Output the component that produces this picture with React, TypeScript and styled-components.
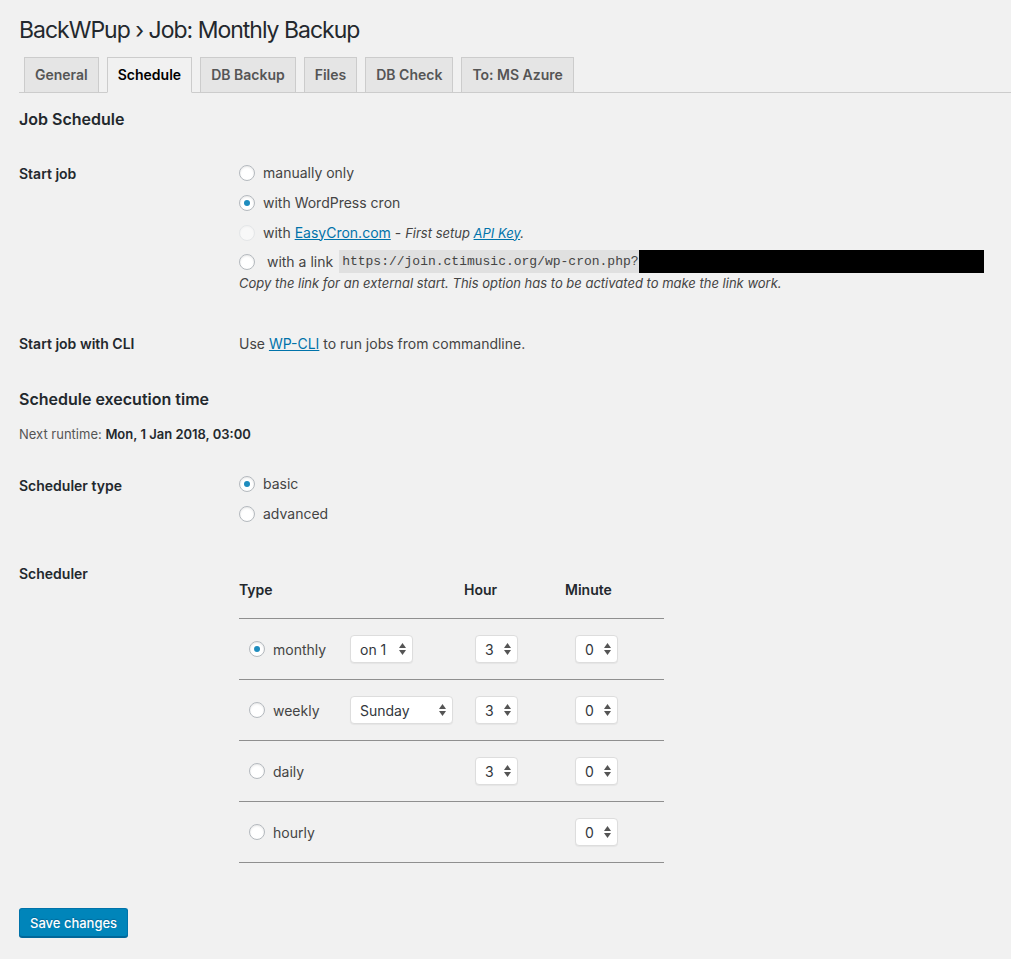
import styled, { createGlobalStyle } from 'styled-components'

const GlobalStyle = createGlobalStyle`
    html, body {
        margin: 0;
        padding: 0;
        background: #f1f1f1;
    }
    body {
        font-family: Inter, "Liberation Sans", Arial, sans-serif;
        color: #444;
        font-size: 13px;
    }
`

const Wrap = styled.div`
    padding-left: 19px;
    padding-bottom: 20px;
`

const Title = styled.h1`
    margin: 16px 0 12px;
    font-size: 23px;
    line-height: 29px;
    font-weight: 400;
    letter-spacing: -1px;
    color: #23282d;
`

const TabBar = styled.nav`
    display: flex;
    border-bottom: 1px solid #ccc;
    padding-left: 5px;
    height: 35px;
`

const Tab = styled.a<{ $active?: boolean }>`
    display: block;
    margin-right: 8px;
    padding: 5px 10px;
    height: 24px;
    line-height: 24px;
    font-size: 14px;
    font-weight: 600;
    text-decoration: none;
    border: 1px solid #ccc;
    background: ${p => (p.$active ? '#f1f1f1' : '#e5e5e5')};
    border-bottom-color: ${p => (p.$active ? '#f1f1f1' : '#ccc')};
    color: ${p => (p.$active ? '#000' : '#555')};
`

const SectionTitle = styled.h3<{ $top: number }>`
    margin: ${p => p.$top}px 0 0;
    font-size: 16px;
    line-height: 21px;
    font-weight: 600;
    color: #23282d;
`

const Row = styled.div<{ $top: number }>`
    display: grid;
    grid-template-columns: 220px 1fr;
    margin-top: ${p => p.$top}px;
`

const Label = styled.div<{ $pad?: number }>`
    padding-top: ${p => p.$pad ?? 0}px;
    font-size: 14px;
    line-height: 18px;
    font-weight: 600;
    color: #23282d;
`

const Value = styled.div`
    font-size: 14px;
    line-height: 18px;
    color: #444;
`

const Choice = styled.label<{ $h?: number }>`
    display: flex;
    align-items: center;
    height: ${p => p.$h ?? 30}px;
    padding-top: 1px;
    box-sizing: border-box;
    font-size: 14px;
    color: #444;
    white-space: nowrap;
`

const Radio = styled.span<{ $checked?: boolean; $disabled?: boolean }>`
    position: relative;
    flex: none;
    width: 16px;
    height: 16px;
    box-sizing: border-box;
    margin-right: 8px;
    border-radius: 50%;
    border: 1px solid ${p => (p.$disabled ? '#e4e6e8' : '#b4b9be')};
    background: ${p => (p.$disabled ? 'rgba(255,255,255,.5)' : '#fff')};
    box-shadow: inset 0 1px 2px rgba(0, 0, 0, ${p => (p.$disabled ? 0.03 : 0.1)});
    &::after {
        content: '';
        display: ${p => (p.$checked ? 'block' : 'none')};
        position: absolute;
        left: 4px;
        top: 4px;
        width: 6px;
        height: 6px;
        border-radius: 50%;
        background: #1e8cbe;
    }
`

const Link = styled.a`
    color: #0073aa;
    text-decoration: underline;
`

const Em = styled.em`
    font-size: 13px;
`

const Code = styled.code`
    margin-left: 6px;
    padding: 3px 0 2px 3px;
    background: rgba(0, 0, 0, 0.07);
    font-family: "Liberation Mono", "DejaVu Sans Mono", monospace;
    font-size: 13px;
    line-height: 18px;
`

const Redacted = styled.span`
    display: inline-block;
    width: 345px;
    height: 23px;
    background: #000;
    vertical-align: middle;
`

const Hint = styled.p`
    margin: 0;
    font-size: 13px;
    line-height: 16px;
    font-style: italic;
    color: #444;
`

const Runtime = styled.p`
    margin: 15px 0 0;
    font-size: 13px;
    line-height: 18px;
    color: #555;
    strong {
        color: #23282d;
        font-weight: 600;
    }
`

const SchedTable = styled.div`
    width: 425px;
`

const SchedRow = styled.div<{ $head?: boolean }>`
    display: grid;
    grid-template-columns: 111px 114px 101px 99px;
    align-items: center;
    height: ${p => (p.$head ? 53 : 60)}px;
    border-bottom: 1px solid #8f8f8f;
`

const HeadCell = styled.div<{ $span?: number }>`
    grid-column: span ${p => p.$span ?? 1};
    align-self: start;
    padding-top: 16px;
    font-size: 14px;
    line-height: 18px;
    font-weight: 600;
    color: #23282d;
`

const Cell = styled.div<{ $pad?: number }>`
    display: flex;
    align-items: center;
    padding-left: ${p => p.$pad ?? 0}px;
    font-size: 14px;
    color: #444;
`

const Select = styled.div<{ $w: number }>`
    display: flex;
    align-items: center;
    justify-content: space-between;
    box-sizing: border-box;
    width: ${p => p.$w}px;
    height: 28px;
    padding: 0 6px 0 9px;
    background: #fff;
    border: 1px solid #ddd;
    border-radius: 4px;
    box-shadow: 0 1px 1px rgba(0, 0, 0, 0.05);
    font-size: 14px;
    color: #32373c;
`

const Button = styled.button`
    margin-top: 45px;
    height: 29px;
    padding: 0 10px;
    background: #0085ba;
    border: 1px solid #0073aa;
    border-bottom-color: #006799;
    border-radius: 3px;
    box-shadow: 0 1px 0 #006799;
    color: #fff;
    font-family: inherit;
    font-size: 13px;
    font-weight: 500;
    text-shadow: 0 -1px 1px #006799;
`

const Arrows = () => (
    <svg width="7" height="12" viewBox="0 0 7 12">
        <polygon points="0,5 3.5,0 7,5" fill="#555" />
        <polygon points="0,7 3.5,12 7,7" fill="#555" />
    </svg>
)

const Dropdown = ({ value, width }: { value: string; width: number }) => (
    <Select $w={width}>
        <span>{value}</span>
        <Arrows />
    </Select>
)

const scheduleRows = [
    { type: 'monthly', checked: true, extra: { value: 'on 1', width: 63 }, hour: true },
    { type: 'weekly', checked: false, extra: { value: 'Sunday', width: 103 }, hour: true },
    { type: 'daily', checked: false, extra: null, hour: true },
    { type: 'hourly', checked: false, extra: null, hour: false },
]

const tabs = ['General', 'Schedule', 'DB Backup', 'Files', 'DB Check', 'To: MS Azure']

const App = () => {
    return (
        <>
            <GlobalStyle />
            <Wrap>
                <Title>BackWPup › Job: Monthly Backup</Title>
                <TabBar>
                    {tabs.map(t => (
                        <Tab key={t} $active={t === 'Schedule'}>{t}</Tab>
                    ))}
                </TabBar>

                <SectionTitle $top={16}>Job Schedule</SectionTitle>

                <Row $top={27}>
                    <Label $pad={8}>Start job</Label>
                    <Value>
                        <Choice><Radio />manually only</Choice>
                        <Choice><Radio $checked />with WordPress cron</Choice>
                        <Choice>
                            <Radio $disabled />with&nbsp;<Link>EasyCron.com</Link>&nbsp;-&nbsp;<Em>First setup <Link>API Key</Link>.</Em>
                        </Choice>
                        <Choice $h={28}>
                            <Radio />&nbsp;with a link
                            <Code>https://join.ctimusic.org/wp-cron.php?</Code>
                            <Redacted />
                        </Choice>
                        <Hint>Copy the link for an external start. This option has to be activated to make the link work.</Hint>
                    </Value>
                </Row>

                <Row $top={44}>
                    <Label>Start job with CLI</Label>
                    <Value>Use <Link>WP-CLI</Link> to run jobs from commandline.</Value>
                </Row>

                <SectionTitle $top={36}>Schedule execution time</SectionTitle>
                <Runtime>Next runtime: <strong>Mon, 1 Jan 2018, 03:00</strong></Runtime>

                <Row $top={25}>
                    <Label $pad={9}>Scheduler type</Label>
                    <Value>
                        <Choice><Radio $checked />basic</Choice>
                        <Choice><Radio />advanced</Choice>
                    </Value>
                </Row>

                <Row $top={37}>
                    <Label>Scheduler</Label>
                    <SchedTable>
                        <SchedRow $head>
                            <HeadCell $span={2}>Type</HeadCell>
                            <HeadCell>Hour</HeadCell>
                            <HeadCell>Minute</HeadCell>
                        </SchedRow>
                        {scheduleRows.map(r => (
                            <SchedRow key={r.type}>
                                <Cell $pad={10}><Radio $checked={r.checked} />{r.type}</Cell>
                                <Cell>{r.extra && <Dropdown value={r.extra.value} width={r.extra.width} />}</Cell>
                                <Cell $pad={11}>{r.hour && <Dropdown value="3" width={43} />}</Cell>
                                <Cell $pad={10}><Dropdown value="0" width={43} /></Cell>
                            </SchedRow>
                        ))}
                    </SchedTable>
                </Row>

                <Button>Save changes</Button>
            </Wrap>
        </>
    )
}

export default App
